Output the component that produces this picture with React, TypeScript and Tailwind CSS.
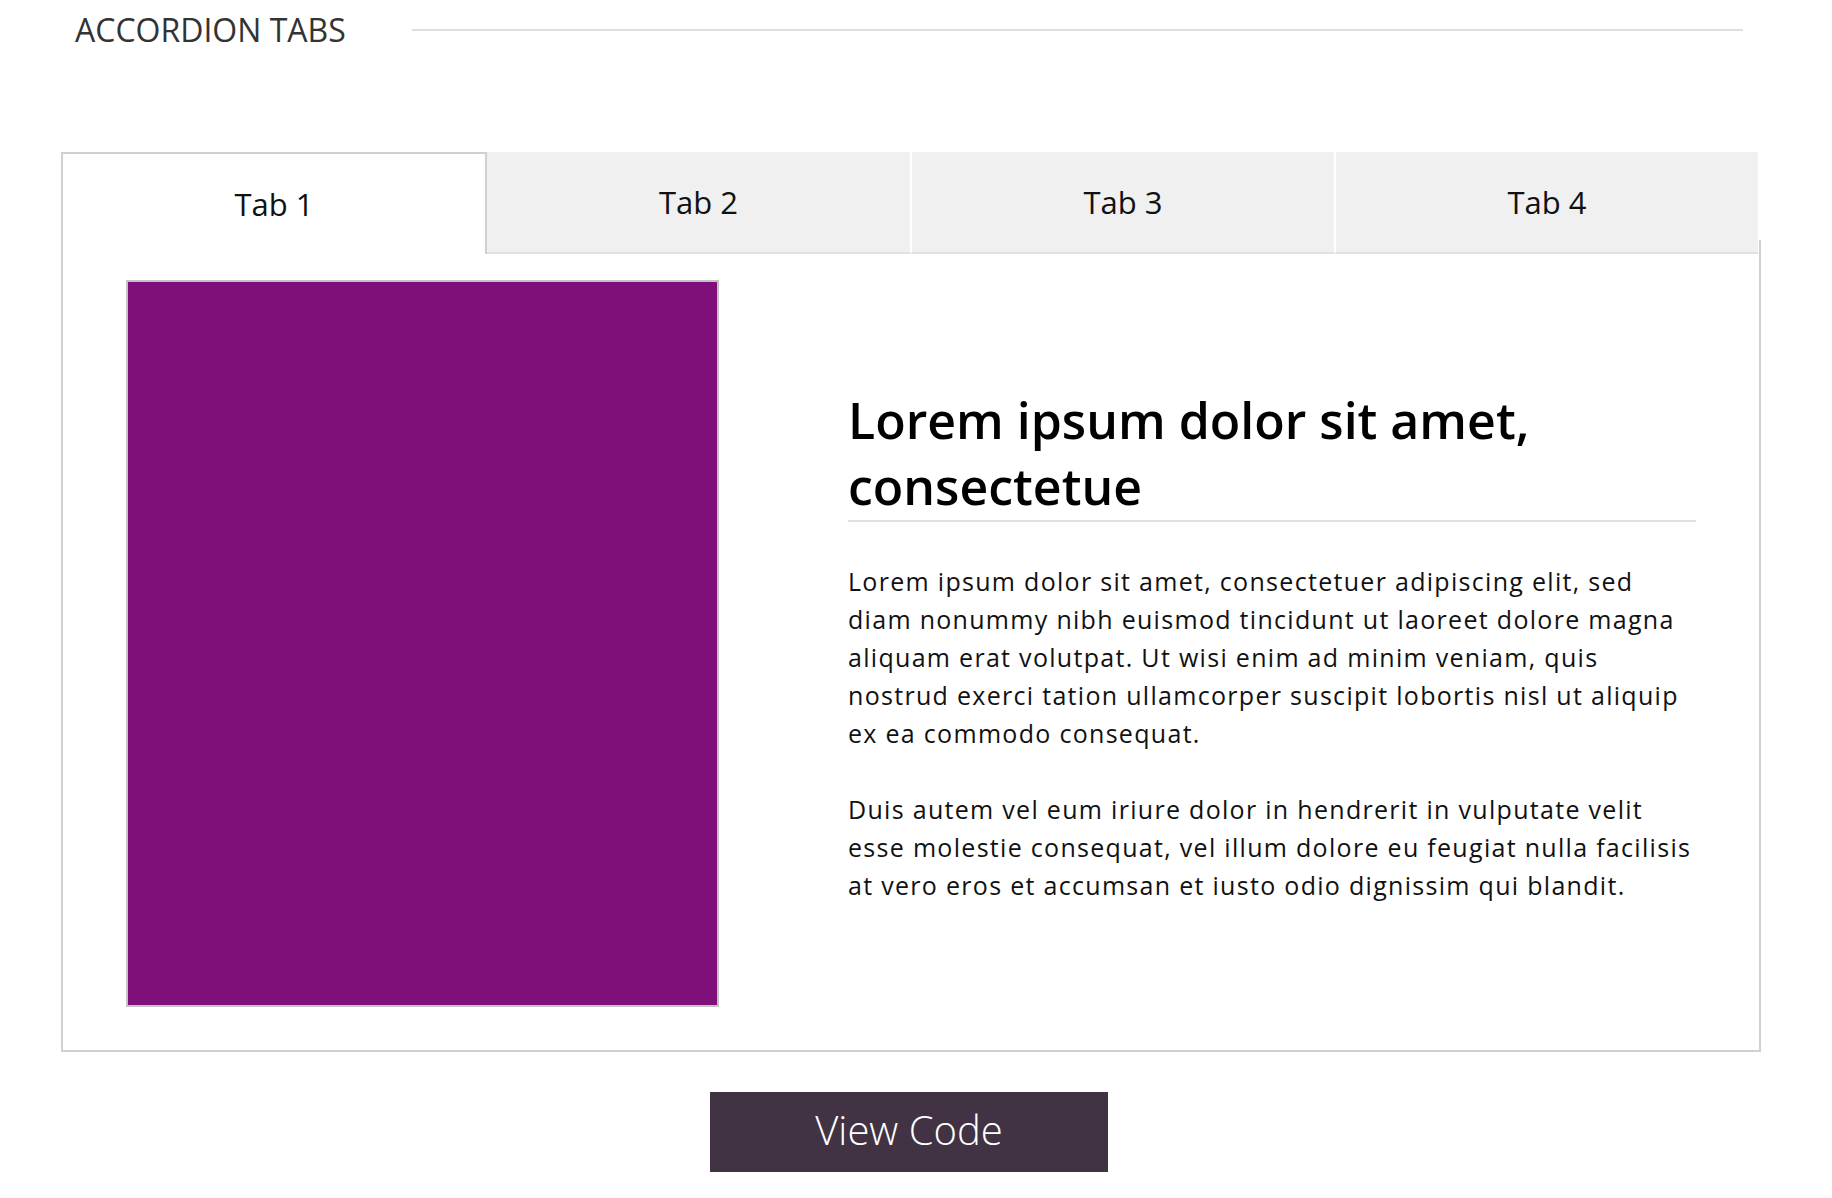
import React from "react";

const tabs = ["Tab 1", "Tab 2", "Tab 3", "Tab 4"];

export default function App() {
  return (
    <div className="w-[1832px] min-h-[1198px] bg-white font-['Open_Sans',sans-serif]">
      <div className="ml-[61px] w-[1700px]">
        {/* Section header */}
        <div className="flex items-center pt-[8px] pl-[14px] pr-[18px]">
          <h2 className="text-[32px] leading-[44px] font-normal text-[#333333] whitespace-nowrap">
            ACCORDION TABS
          </h2>
          <div className="ml-[66px] h-[2px] flex-1 bg-[#dedede]" />
        </div>

        {/* Tabs */}
        <div className="relative z-10 mt-[100px] mr-[3px] flex h-[102px]">
          <div className="flex w-[426px] items-center justify-center border-2 border-b-0 border-[#d0d0d0] bg-white">
            <span className="text-[31px] leading-[42px] text-[#111111]">{tabs[0]}</span>
          </div>
          <div className="flex w-[423px] items-center justify-center border-b-2 border-[#e0e0e0] bg-[#f0f0f0]">
            <span className="text-[31px] leading-[42px] text-[#111111]">{tabs[1]}</span>
          </div>
          <div className="flex w-[424px] items-center justify-center border-l-2 border-l-white border-b-2 border-b-[#e0e0e0] bg-[#f0f0f0]">
            <span className="text-[31px] leading-[42px] text-[#111111]">{tabs[2]}</span>
          </div>
          <div className="flex w-[424px] items-center justify-center border-l-2 border-l-white border-b-2 border-b-[#e0e0e0] bg-[#f0f0f0]">
            <span className="text-[31px] leading-[42px] text-[#111111]">{tabs[3]}</span>
          </div>
        </div>

        {/* Panel */}
        <div className="-mt-[14px] flex h-[812px] items-center border-x-2 border-b-2 border-[#d0d0d0] pl-[63px] pt-[40px] pb-[43px]">
          <div className="h-[727px] w-[593px] shrink-0 border-2 border-[#c4c4c4] bg-[#7f0f7b]" />
          <div className="ml-[129px] w-[848px] pt-[4px]">
            <h3 className="border-b-2 border-[#e0e0e0] pb-[1px] text-[50px] font-semibold leading-[66px] text-black">
              Lorem ipsum dolor sit amet, consectetue
            </h3>
            <p className="mt-[40px] text-[25px] leading-[38px] tracking-[1.3px] text-[#111111] whitespace-nowrap">
              Lorem ipsum dolor sit amet, consectetuer adipiscing elit, sed
              <br />
              diam nonummy nibh euismod tincidunt ut laoreet dolore magna
              <br />
              aliquam erat volutpat. Ut wisi enim ad minim veniam, quis
              <br />
              nostrud exerci tation ullamcorper suscipit lobortis nisl ut aliquip
              <br />
              ex ea commodo consequat.
            </p>
            <p className="mt-[38px] text-[25px] leading-[38px] tracking-[1.3px] text-[#111111] whitespace-nowrap">
              Duis autem vel eum iriure dolor in hendrerit in vulputate velit
              <br />
              esse molestie consequat, vel illum dolore eu feugiat nulla facilisis
              <br />
              at vero eros et accumsan et iusto odio dignissim qui blandit.
            </p>
          </div>
        </div>

        {/* Button */}
        <div className="mt-[40px] ml-[649px] flex h-[80px] w-[398px] items-center justify-center bg-[#413244] pb-[4px]">
          <span className="text-[40px] font-light leading-[54px] text-white">View Code</span>
        </div>
      </div>
    </div>
  );
}
